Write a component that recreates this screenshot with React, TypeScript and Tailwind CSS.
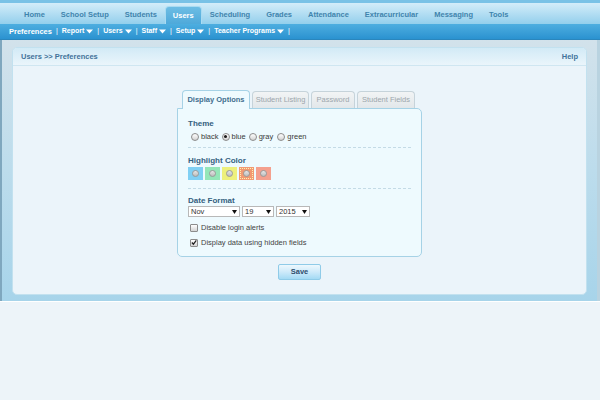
import React from "react"

// Preferences page of the school admin: top tabs, sub menu, and the
// "Display Options" tab box.

const topTabs = [
  "Home",
  "School Setup",
  "Students",
  "Users",
  "Scheduling",
  "Grades",
  "Attendance",
  "Extracurricular",
  "Messaging",
  "Tools",
]

const subMenu = [
  { label: "Report", arrow: true },
  { label: "Users", arrow: true },
  { label: "Staff", arrow: true },
  { label: "Setup", arrow: true },
  { label: "Teacher Programs", arrow: true },
]

function Caret() {
  return (
    <svg width="7" height="5" viewBox="0 0 7 5" className="ml-[2px] inline-block">
      <path d="M0 0.5 L7 0.5 L3.5 4.5 Z" fill="currentColor" />
    </svg>
  )
}

function Radio({ checked }: { checked?: boolean }) {
  return (
    <span className="flex h-[8px] w-[8px] items-center justify-center rounded-full border border-[#8c8c8c] bg-gradient-to-b from-[#ffffff] to-[#d4d4d4]">
      {checked && <span className="h-[3px] w-[3px] rounded-full bg-[#1a1a1a]" />}
    </span>
  )
}

function Checkbox({ checked }: { checked?: boolean }) {
  return (
    <span className="flex h-[8px] w-[8px] items-center justify-center rounded-[1px] border border-[#8c8c8c] bg-gradient-to-b from-[#ffffff] to-[#d4d4d4]">
      {checked && (
        <svg width="7" height="7" viewBox="0 0 7 7">
          <path d="M1 3.5 L2.8 5.5 L6.2 1" stroke="#222" strokeWidth="1.4" fill="none" />
        </svg>
      )}
    </span>
  )
}

function Select({ value, width }: { value: string; width: string }) {
  return (
    <div
      className={`flex h-[11px] items-center justify-between border border-[#b8b8b8] bg-white px-[2px] text-[7.5px] text-[#333] ${width}`}
    >
      <span>{value}</span>
      <svg width="5" height="4" viewBox="0 0 5 4">
        <path d="M0 0 L5 0 L2.5 4 Z" fill="#111" />
      </svg>
    </div>
  )
}

const swatches = [
  { bg: "bg-[#80d0f4]", ring: "" },
  { bg: "bg-[#94e6b8]", ring: "" },
  { bg: "bg-[#eef07c]", ring: "" },
  { bg: "bg-[#f29a72]", ring: "outline-1 outline-dotted outline-[#fff3b0] -outline-offset-2" },
  { bg: "bg-[#f4a08e]", ring: "" },
]

export default function App() {
  return (
    <div className="h-[400px] w-[600px] overflow-hidden bg-[#edf4f9] font-['Liberation_Sans',Arial,sans-serif]">
      {/* Main tabs */}
      <div className="flex h-[24px] items-end border-t-[3px] border-[#79c2e6] bg-gradient-to-b from-[#d3edf9] to-[#93cfec] pl-[16px]">
        {topTabs.map((t) =>
          t === "Users" ? (
            <div
              key={t}
              className="flex h-[18px] items-center rounded-t-[4px] border border-b-0 border-[#a9dbf2] bg-gradient-to-b from-[#6dbde4] to-[#4ea9da] px-[7px] text-[7.5px] font-bold text-white"
            >
              {t}
            </div>
          ) : (
            <div key={t} className="flex h-[18px] items-center px-[8px] text-[7.5px] font-bold text-[#3f84ad]">
              {t}
            </div>
          ),
        )}
      </div>

      {/* Sub menu */}
      <div className="flex h-[16px] items-center border-b border-[#2a86bd] bg-gradient-to-b from-[#4daee0] to-[#2a92d0] pl-[9px] text-[7px] font-bold text-white">
        <span className="text-[7.5px]">Preferences</span>
        {subMenu.map((m) => (
          <React.Fragment key={m.label}>
            <span className="px-[4px] font-normal">|</span>
            <span className="flex items-center">
              {m.label}
              {m.arrow && <Caret />}
            </span>
          </React.Fragment>
        ))}
        <span className="px-[4px] font-normal">|</span>
      </div>

      {/* Frame around the panel */}
      <div className="border-l-[2px] border-r-[3px] border-l-[#7fa7be] border-r-[#b9d3e0] bg-gradient-to-b from-[#d2e2eb] via-[#bcdcec] to-[#a7d4ea] px-[10px] pb-[6px] pt-[7px]">
        <div className="overflow-hidden rounded-[5px] border border-[#c2e1ef] bg-[#ebf4fa]">
          <div className="flex h-[18px] items-center justify-between border-b border-[#cfe6f1] bg-gradient-to-b from-[#d2eaf6] to-[#eaf5fb] px-[8px] text-[7.5px] font-bold text-[#41729a]">
            <span>Users &gt;&gt; Preferences</span>
            <span>Help</span>
          </div>

          <div className="flex flex-col items-center pb-[14px] pt-[24px]">
            <div className="w-[245px]">
              {/* Tabs */}
              <div className="flex items-end gap-[2px] pl-[5px]">
                <div className="relative z-10 -mb-px flex h-[19px] w-[68px] items-center justify-center rounded-t-[4px] border border-b-0 border-[#a6d2e6] bg-[#eefafe] text-[7.5px] font-bold text-[#3e6e8e]">
                  Display Options
                </div>
                <div className="flex h-[17px] w-[57px] items-center justify-center rounded-t-[4px] border border-b-0 border-[#c6d3da] bg-gradient-to-b from-[#f2f4f5] to-[#e2e7ea] text-[7.5px] text-[#9ca6ac]">
                  Student Listing
                </div>
                <div className="flex h-[17px] w-[44px] items-center justify-center rounded-t-[4px] border border-b-0 border-[#c6d3da] bg-gradient-to-b from-[#f2f4f5] to-[#e2e7ea] text-[7.5px] text-[#9ca6ac]">
                  Password
                </div>
                <div className="flex h-[17px] w-[58px] items-center justify-center rounded-t-[4px] border border-b-0 border-[#c6d3da] bg-gradient-to-b from-[#f2f4f5] to-[#e2e7ea] text-[7.5px] text-[#9ca6ac]">
                  Student Fields
                </div>
              </div>

              {/* Tab body */}
              <div className="rounded-[5px] rounded-tl-none border border-[#a6d2e6] bg-[#eefafe] px-[10px] pb-[8px] pt-[9px] text-[7.5px] leading-[11px] text-[#3a3a3a]">
                <div className="font-bold text-[8px] text-[#34607f]">Theme</div>
                <div className="mt-[2px] flex items-center pl-[3px]">
                  <Radio />
                  <span className="ml-[2px] mr-[3px]">black</span>
                  <Radio checked />
                  <span className="ml-[2px] mr-[3px]">blue</span>
                  <Radio />
                  <span className="ml-[2px] mr-[4px]">gray</span>
                  <Radio />
                  <span className="ml-[2px]">green</span>
                </div>

                <div className="mt-[5px] border-t border-dashed border-[#c4dbe6]" />

                <div className="mt-[7px] font-bold text-[8px] text-[#34607f]">Highlight Color</div>
                <div className="mt-[1px] flex gap-[2px]">
                  {swatches.map((s, i) => (
                    <div key={i} className={`flex h-[13px] w-[15px] items-center justify-center ${s.bg} ${s.ring}`}>
                      <span className="h-[7px] w-[7px] rounded-full border border-[#9a9a9a] bg-gradient-to-b from-[#e6e6e6] to-[#bdbdbd]" />
                    </div>
                  ))}
                </div>

                <div className="mt-[8px] border-t border-dashed border-[#c4dbe6]" />

                <div className="mt-[6px] font-bold text-[8px] text-[#34607f]">Date Format</div>
                <div className="flex gap-[2px]">
                  <Select value="Nov" width="w-[52px]" />
                  <Select value="19" width="w-[32px]" />
                  <Select value="2015" width="w-[34px]" />
                </div>

                <div className="mt-[5px] flex items-center pl-[2px]">
                  <Checkbox />
                  <span className="ml-[3px] text-[#444]">Disable login alerts</span>
                </div>
                <div className="mt-[4px] flex items-center pl-[2px]">
                  <Checkbox checked />
                  <span className="ml-[3px] text-[#444]">Display data using hidden fields</span>
                </div>
              </div>

              {/* Save */}
              <div className="mt-[7px] flex justify-center">
                <button className="flex h-[16px] w-[43px] items-center justify-center rounded-[2px] border border-[#8fcbe8] bg-gradient-to-b from-[#eef8fd] via-[#cdeafa] to-[#a3daf4] text-[7.5px] font-bold text-[#2c4c6c]">
                  Save
                </button>
              </div>
            </div>
          </div>
        </div>
      </div>
      <div className="h-px bg-white" />
    </div>
  )
}
